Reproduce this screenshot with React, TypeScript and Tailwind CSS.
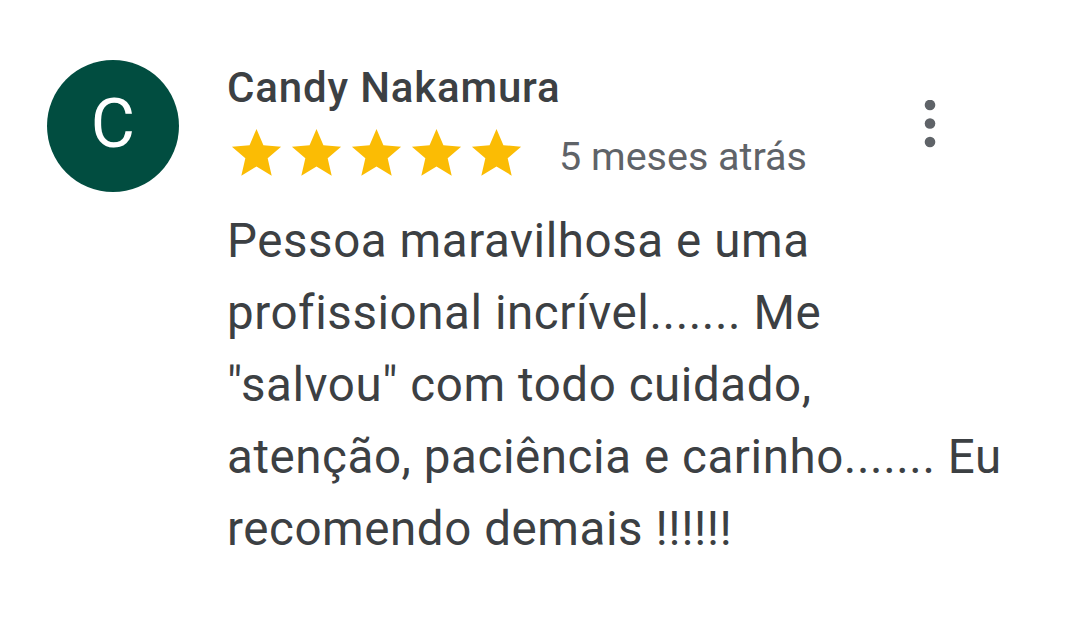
import React from 'react';

const STAR = 'M12 17.27L18.18 21l-1.64-7.03L22 9.24l-7.19-.61L12 2 9.19 8.63 2 9.24l5.46 4.73L5.82 21z';

function Star() {
  return (
    <svg width="59" height="59" viewBox="0 0 24 24" className="shrink-0">
      <path d={STAR} fill="#fbbc04" />
    </svg>
  );
}

function MoreVert() {
  return (
    <svg width="12" height="48" viewBox="0 0 12 48">
      <circle cx="6" cy="5" r="5.3" fill="#5f6368" />
      <circle cx="6" cy="23.5" r="5.3" fill="#5f6368" />
      <circle cx="6" cy="42" r="5.3" fill="#5f6368" />
    </svg>
  );
}

export default function App() {
  const lines = [
    'Pessoa maravilhosa e uma',
    'profissional incrível....... Me',
    '"salvou" com todo cuidado,',
    'atenção, paciência e carinho....... Eu',
    'recomendo demais !!!!!!',
  ];

  return (
    <div
      className="w-[1080px] h-[625px] bg-white overflow-hidden flex items-start pl-[47px] pt-[60px]"
      style={{ fontFamily: 'Roboto, "Noto Sans", sans-serif' }}
    >
      <div className="w-[132px] h-[132px] rounded-full bg-[#014d40] flex items-center justify-center shrink-0">
        <span className="text-white text-[68px] leading-none -mt-[4px]">C</span>
      </div>

      <div className="ml-[48px] flex flex-col">
        <div className="w-[709px] flex items-start justify-between pt-[4px]">
          <div className="flex flex-col">
            <h2 className="text-[42px] leading-[48px] font-medium text-[#3c4043] tracking-[0.02em]">
              Candy Nakamura
            </h2>
            <div className="mt-[12px] flex items-center h-[59px]">
              <div className="flex items-center gap-[1px]">
                <Star />
                <Star />
                <Star />
                <Star />
                <Star />
              </div>
              <span className="ml-[33px] mt-[6px] text-[39.5px] leading-[59px] text-[#5f6368]">5 meses atrás</span>
            </div>
          </div>
          <div className="mt-[36px]">
            <MoreVert />
          </div>
        </div>

        <p className="mt-[22px] text-[47.5px] leading-[72px] text-[#3c4043] tracking-[0.012em] whitespace-nowrap">
          {lines.map((l, i) => (
            <React.Fragment key={i}>
              {l}
              {i < lines.length - 1 && <br />}
            </React.Fragment>
          ))}
        </p>
      </div>
    </div>
  );
}
